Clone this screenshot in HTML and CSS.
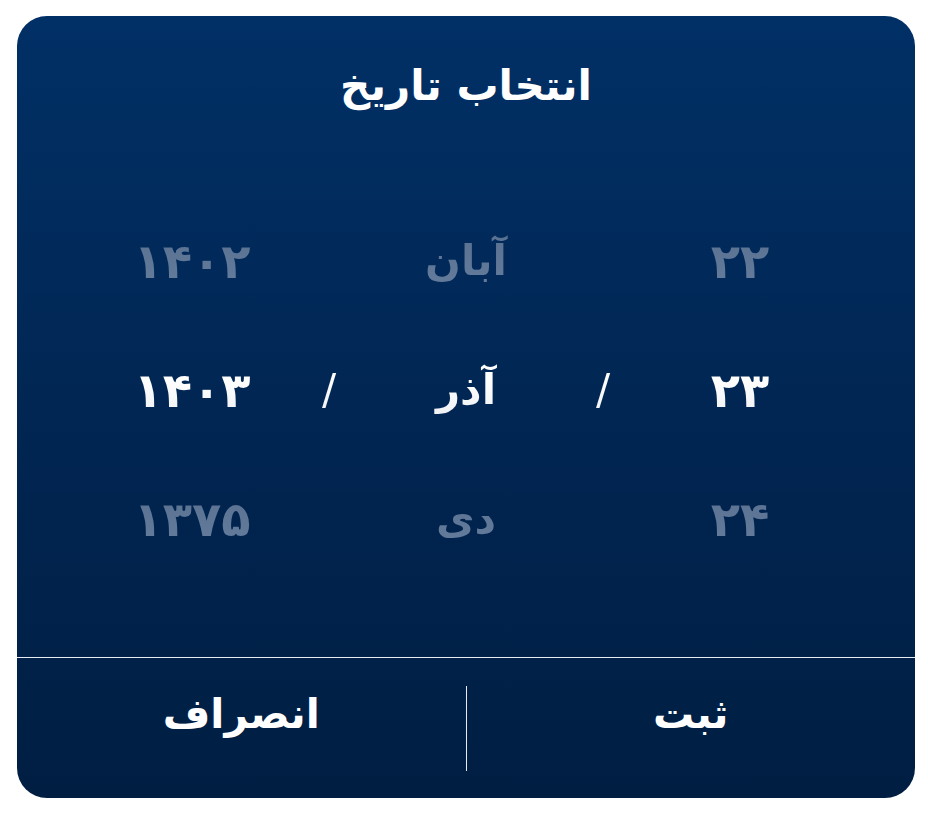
FILE: index.html
```html
<!DOCTYPE html>
<html lang="fa" dir="rtl">
<head>
<meta charset="utf-8">
<title>انتخاب تاریخ</title>
<link rel="stylesheet" href="styles.css">
</head>
<body>
<div class="dialog">
  <h1 class="title">انتخاب تاریخ</h1>
  <div class="picker">
    <div class="cell num dim">۲۲</div>
    <div class="cell"></div>
    <div class="cell dim">آبان</div>
    <div class="cell"></div>
    <div class="cell num dim">۱۴۰۲</div>

    <div class="cell num sel">۲۳</div>
    <div class="cell sel slash">/</div>
    <div class="cell sel">آذر</div>
    <div class="cell sel slash">/</div>
    <div class="cell num sel">۱۴۰۳</div>

    <div class="cell num dim">۲۴</div>
    <div class="cell"></div>
    <div class="cell dim">دی</div>
    <div class="cell"></div>
    <div class="cell num dim">۱۳۷۵</div>
  </div>
  <div class="actions">
    <button class="btn">ثبت</button>
    <span class="sep"></span>
    <button class="btn">انصراف</button>
  </div>
</div>
</body>
</html>
```

FILE: styles.css
```css
html, body {
  margin: 0;
  padding: 0;
  background: #ffffff;
}
body {
  width: 928px;
  height: 814px;
  padding: 16px 13px 16px 17px;
  box-sizing: border-box;
  font-family: "DejaVu Sans", sans-serif;
}
.dialog {
  width: 898px;
  height: 782px;
  border-radius: 30px;
  overflow: hidden;
  background: linear-gradient(to bottom, #013066 0%, #012653 50%, #001e42 100%);
  display: flex;
  flex-direction: column;
  color: #ffffff;
}
.title {
  margin: 0;
  height: 146px;
  display: flex;
  align-items: center;
  justify-content: center;
  font-size: 42px;
  font-weight: bold;
  padding-bottom: 8px;
  box-sizing: border-box;
}
.picker {
  flex: 1;
  display: grid;
  grid-template-columns: repeat(5, 137px);
  grid-template-rows: repeat(3, 129px);
  justify-content: center;
  align-content: start;
  padding-top: 34px;
  border-bottom: 1px solid #e8ecf2;
}
.cell {
  display: flex;
  align-items: center;
  justify-content: center;
  font-size: 42px;
  font-weight: bold;
}
.cell.num {
  font-size: 48px;
}
.dim {
  background: linear-gradient(to bottom, #52698a, #6c84a4);
  -webkit-background-clip: text;
  background-clip: text;
  color: transparent;
}
.sel {
  background: linear-gradient(to bottom, #ffffff 40%, #dfe4ec);
  -webkit-background-clip: text;
  background-clip: text;
  color: transparent;
}
.slash {
  font-weight: normal;
  font-size: 42px;
}
.actions {
  height: 140px;
  display: flex;
  align-items: center;
}
.btn {
  flex: 1;
  height: 100%;
  background: none;
  border: 0;
  color: #ffffff;
  font-family: inherit;
  font-size: 41px;
  font-weight: bold;
  padding: 0 0 28px 0;
}
.sep {
  width: 1px;
  height: 85px;
  background: #e8ecf2;
}
```
